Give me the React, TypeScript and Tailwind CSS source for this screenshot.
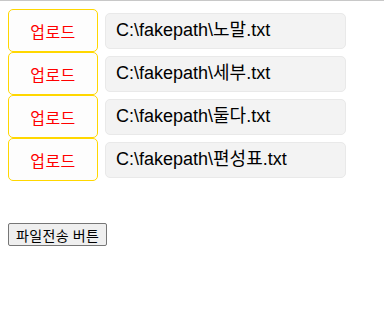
import React from "react";

const files = ["노말", "세부", "둘다", "편성표"];

export default function App() {
  return (
    <div className="w-[384px] h-[333px] bg-white border-t border-[#c8c8c8] [font-family:'Liberation_Sans','Noto_Sans_CJK_KR',sans-serif]">
      <div className="pt-2 pl-2 flex flex-col">
        {files.map((f) => (
          <div key={f} className="flex items-center h-[43px]">
            <button className="w-[90px] h-[43px] border border-[#ffd700] rounded-[5px] bg-[#fdfdfd] text-[#ff0000] text-[16px] tracking-[0.5px] [font-family:'Noto_Sans_CJK_KR',sans-serif]">
              업로드
            </button>
            <div className="ml-[7px] w-[241px] h-[36px] bg-[#f3f3f3] border border-[#e9e9e9] rounded-[5px] flex items-center pl-[10px] text-[18px] text-black">
              C:\fakepath\{f}.txt
            </div>
          </div>
        ))}
        <div className="mt-[42px] flex">
          <button className="h-[23px] px-[7px] bg-[#efefef] border border-[#767676] rounded-[2px] text-[14px] tracking-[0.4px] text-black [font-family:'Noto_Sans_CJK_KR',sans-serif] leading-none">
            파일전송 버튼
          </button>
        </div>
      </div>
    </div>
  );
}
